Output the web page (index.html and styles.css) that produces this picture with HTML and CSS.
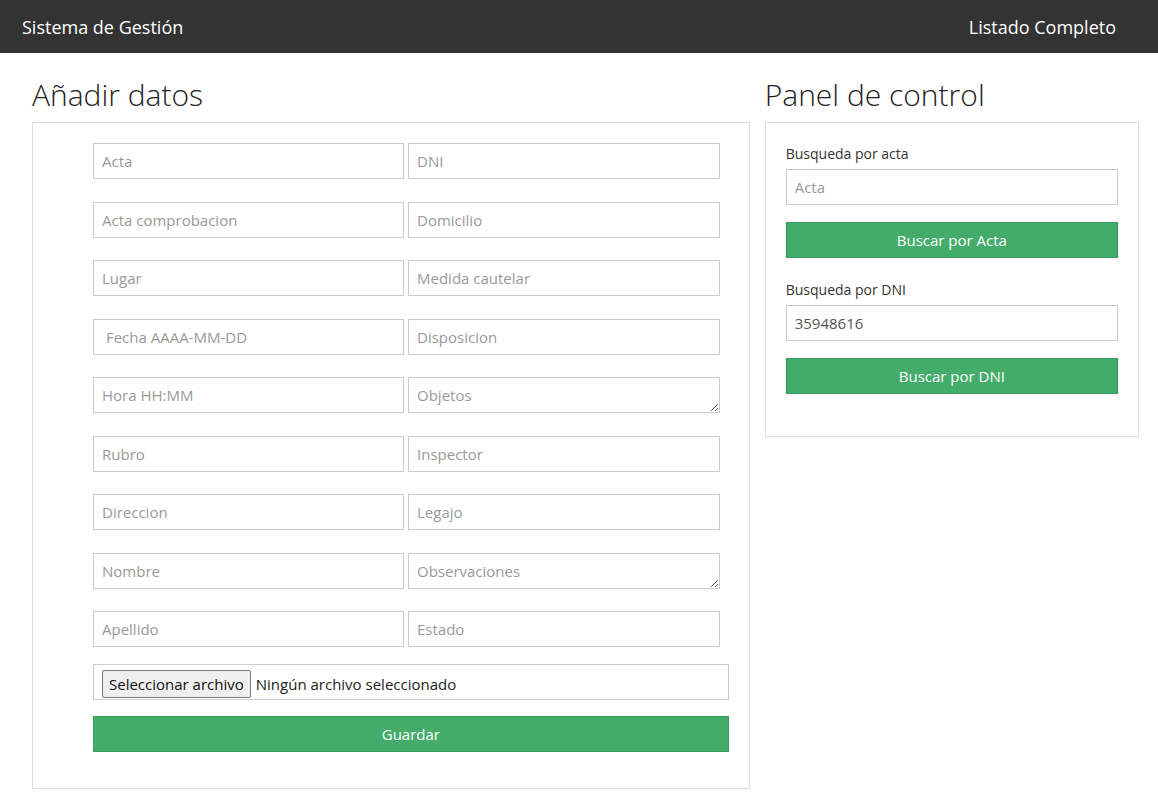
FILE: index.html
```html
<!DOCTYPE html>
<html lang="es">
<head>
<meta charset="utf-8">
<title>Sistema de Gestión</title>
<link rel="stylesheet" href="styles.css">
</head>
<body>
<nav class="navbar">
  <span class="brand">Sistema de Gestión</span>
  <a class="nav-link" href="#">Listado Completo</a>
</nav>
<main class="layout">
  <section class="col-main">
    <h2 class="section-title">Añadir datos</h2>
    <div class="card card-form">
      <form class="data-form">
        <div class="field-grid">
          <input class="field" type="text" placeholder="Acta">
          <input class="field" type="text" placeholder="DNI">
          <input class="field" type="text" placeholder="Acta comprobacion">
          <input class="field" type="text" placeholder="Domicilio">
          <input class="field" type="text" placeholder="Lugar">
          <input class="field" type="text" placeholder="Medida cautelar">
          <input class="field" type="text" placeholder=" Fecha AAAA-MM-DD">
          <input class="field" type="text" placeholder="Disposicion">
          <input class="field" type="text" placeholder="Hora HH:MM">
          <textarea class="field field-area" rows="1" placeholder="Objetos"></textarea>
          <input class="field" type="text" placeholder="Rubro">
          <input class="field" type="text" placeholder="Inspector">
          <input class="field" type="text" placeholder="Direccion">
          <input class="field" type="text" placeholder="Legajo">
          <input class="field" type="text" placeholder="Nombre">
          <textarea class="field field-area" rows="1" placeholder="Observaciones"></textarea>
          <input class="field" type="text" placeholder="Apellido">
          <input class="field" type="text" placeholder="Estado">
        </div>
        <div class="file-input">
          <span class="file-button">Seleccionar archivo</span>
          <span class="file-name">Ningún archivo seleccionado</span>
        </div>
        <button class="btn-success btn-save" type="button">Guardar</button>
      </form>
    </div>
  </section>
  <aside class="col-side">
    <h2 class="section-title">Panel de control</h2>
    <div class="card card-panel">
      <div class="search-group">
        <label class="search-label">Busqueda por acta</label>
        <input class="field" type="text" placeholder="Acta">
        <button class="btn-success" type="button">Buscar por Acta</button>
      </div>
      <div class="search-group">
        <label class="search-label">Busqueda por DNI</label>
        <input class="field" type="text" value="35948616">
        <button class="btn-success" type="button">Buscar por DNI</button>
      </div>
    </div>
  </aside>
</main>
</body>
</html>
```
FILE: styles.css
```css
* {
  box-sizing: border-box;
}

body {
  margin: 0;
  font-family: "Open Sans", "Liberation Sans", sans-serif;
  color: #333;
  background: #fff;
}

.navbar {
  height: 53px;
  background: #333;
  display: flex;
  align-items: center;
  justify-content: space-between;
  padding: 0 42px 0 22px;
}

.brand,
.nav-link {
  color: #fff;
  font-size: 18px;
  line-height: 20px;
  text-decoration: none;
}

.layout {
  display: flex;
  gap: 15px;
  padding: 0 19px 0 32px;
}

.col-main {
  width: 719px;
}

.col-side {
  width: 375px;
}

.section-title {
  margin: 24px 0 9px;
  font-size: 30px;
  line-height: 36px;
  font-weight: 300;
  color: #222;
}

.card {
  border: 1px solid #ddd;
  background: #fff;
}

.card-form {
  padding: 20px 20px 36px 60px;
}

.data-form {
  display: flex;
  flex-direction: column;
}

.field-grid {
  display: grid;
  grid-template-columns: 311px 312px;
  column-gap: 4px;
  row-gap: 22.5px;
}

.field {
  display: block;
  width: 100%;
  height: 36px;
  margin: 0;
  border: 1px solid #ccc;
  border-radius: 0;
  padding: 6px 8px;
  font-family: inherit;
  font-size: 15px;
  line-height: 20px;
  color: #555;
  background: #fff;
}

.field::placeholder {
  color: #999;
}

.field-area {
  padding: 7px 8px;
  resize: both;
}

.file-input {
  margin-top: 17px;
  height: 36px;
  border: 1px solid #ccc;
  display: flex;
  align-items: center;
  gap: 5px;
  padding: 4px 8px 0;
  font-size: 15px;
  color: #222;
}

.file-button {
  display: inline-block;
  height: 28px;
  line-height: 26px;
  padding: 0 6px;
  background: #efefef;
  border: 1px solid #767676;
  border-radius: 2px;
  color: #111;
}

.btn-success {
  display: block;
  width: 100%;
  height: 36px;
  margin-top: 17px;
  border: 1px solid #3b9a5e;
  border-radius: 0;
  background: #43ac6a;
  color: #fff;
  font-family: inherit;
  font-size: 15px;
  cursor: pointer;
}

.btn-save {
  margin-top: 16px;
}

.card-panel {
  padding: 21px 20px 42px;
}

.search-group + .search-group {
  margin-top: 22px;
}

.search-label {
  display: block;
  margin-bottom: 5px;
  font-size: 14px;
  line-height: 20px;
  color: #333;
}
```
